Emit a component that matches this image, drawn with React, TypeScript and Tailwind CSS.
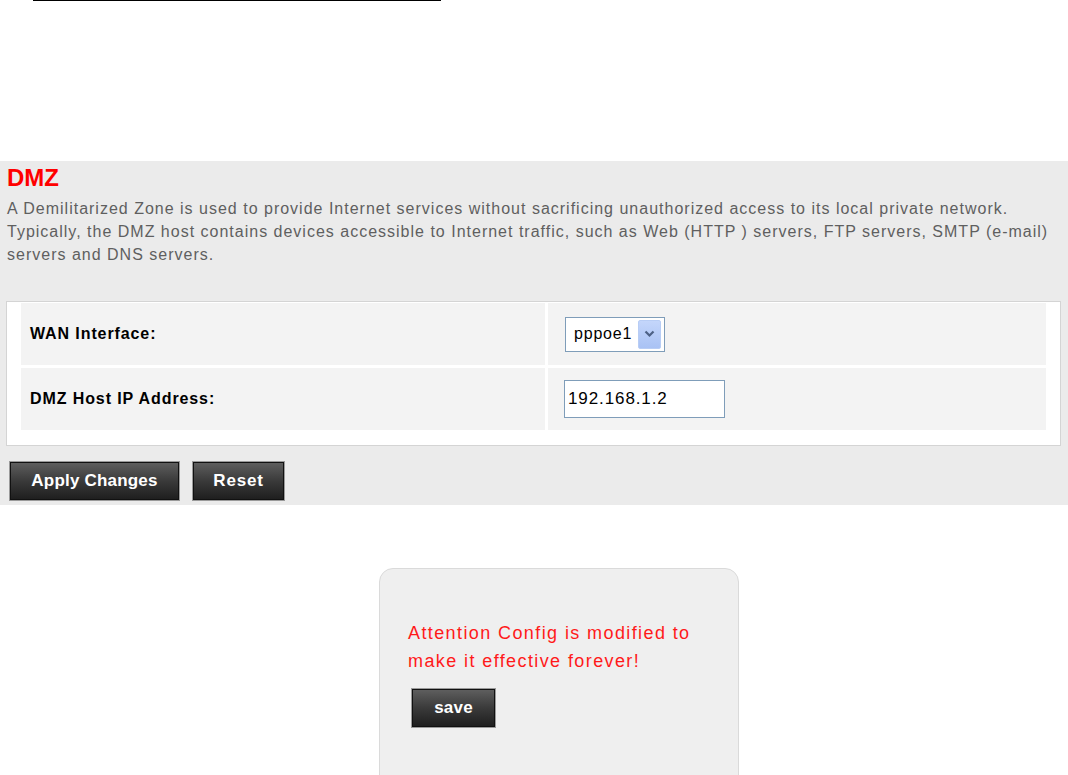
import * as React from "react";

const font = { fontFamily: '"Liberation Sans", Arial, sans-serif' };

const DarkButton: React.FC<{ label: string; className?: string }> = ({ label, className }) => (
    <button
        type="button"
        className={
            "h-[38px] border border-[#111] bg-gradient-to-b from-[#5e5e5e] via-[#3a3a3a] to-[#1f1f1f] text-white font-bold text-[17px] tracking-[0.2px] shadow-[0_0_0_1px_#9a9a9a] " +
            (className ?? "")
        }
    >
        {label}
    </button>
);

export default function App() {
    return (
        <div className="min-h-screen bg-white overflow-hidden" style={font}>
            <div className="ml-[33px] w-[408px] h-px bg-black" />

            <div className="mt-[160px] bg-[#ebebeb] pb-[5px]">
                <div className="pl-[7px] pt-[4px]">
                    <h1 className="text-[24px] leading-[26px] font-bold text-[#ff0000]">DMZ</h1>
                    <p className="mt-[6px] text-[16px] leading-[23px] tracking-[1px] text-[#5f5f5f] whitespace-nowrap">
                        A Demilitarized Zone is used to provide Internet services without sacrificing unauthorized access to its local private network.
                        <br />
                        Typically, the DMZ host contains devices accessible to Internet traffic, such as Web (HTTP ) servers, FTP servers, SMTP (e-mail)
                        <br />
                        servers and DNS servers.
                    </p>
                </div>

                <div className="mt-[35px] ml-[6px] mr-[7px] bg-white border border-[#d4d4d4] px-[14px] pt-[1px] pb-[15px]">
                    <div className="flex flex-col gap-[3px]">
                        <div className="flex gap-[3px] h-[62px]">
                            <div className="w-[524px] bg-[#f3f3f3] flex items-center pl-[9px] font-bold text-[16px] tracking-[0.9px] text-black">
                                WAN Interface:
                            </div>
                            <div className="flex-1 bg-[#f3f3f3] flex items-center pl-[17px]">
                                <div className="h-[35px] w-[100px] border border-[#7f9db9] bg-white flex items-center justify-between pl-[8px] pr-[3px]">
                                    <span className="text-[16px] tracking-[0.8px] text-black">pppoe1</span>
                                    <span className="h-[29px] w-[23px] rounded-[2px] bg-gradient-to-b from-[#c4d6fb] to-[#a9c2f4] border border-[#b8cdf5] flex items-center justify-center">
                                        <svg width="11" height="8" viewBox="0 0 11 8">
                                            <path d="M1.5 1.5 L5.5 5.5 L9.5 1.5" stroke="#4d6185" strokeWidth="2.2" fill="none" />
                                        </svg>
                                    </span>
                                </div>
                            </div>
                        </div>
                        <div className="flex gap-[3px] h-[62px]">
                            <div className="w-[524px] bg-[#f3f3f3] flex items-center pl-[9px] font-bold text-[16px] tracking-[0.9px] text-black">
                                DMZ Host IP Address:
                            </div>
                            <div className="flex-1 bg-[#f3f3f3] flex items-center pl-[16px]">
                                <div className="h-[38px] w-[161px] border border-[#7f9db9] bg-white flex items-center pl-[3px] text-[17px] tracking-[0.9px] text-black">
                                    192.168.1.2
                                </div>
                            </div>
                        </div>
                    </div>
                </div>

                <div className="mt-[16px] ml-[10px] flex gap-[14px]">
                    <DarkButton label="Apply Changes" className="w-[169px]" />
                    <DarkButton label="Reset" className="w-[91px] tracking-[0.8px]" />
                </div>
            </div>

            <div className="mt-[63px] ml-[379px] w-[360px] h-[230px] rounded-[14px] border border-[#dadada] bg-[#efefef] pt-[50px] pl-[28px]">
                <p className="text-[18px] leading-[28px] tracking-[1.4px] text-[#ff1a1a]">
                    Attention Config is modified to
                    <br />
                    make it effective forever!
                </p>
                <DarkButton label="save" className="mt-[14px] ml-[4px] w-[83px] text-[16px]" />
            </div>
        </div>
    );
}
